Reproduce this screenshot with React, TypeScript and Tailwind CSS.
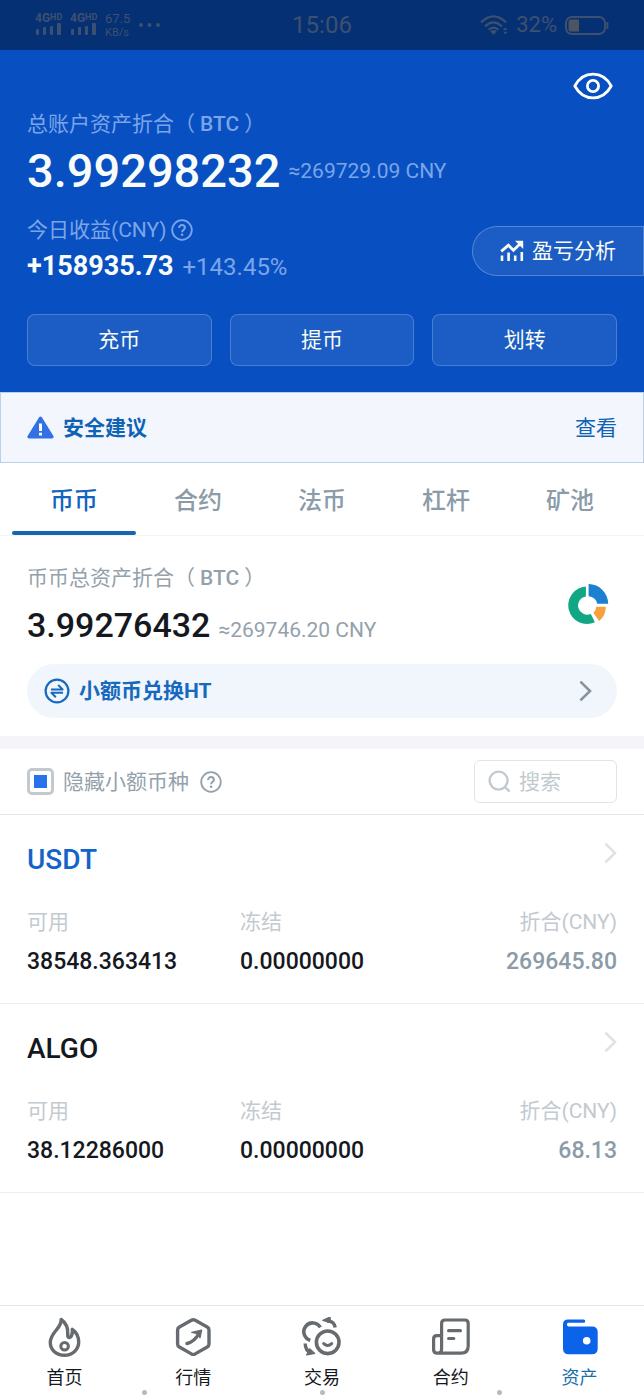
import type { ReactNode } from 'react'

const ACTIONS = ['充币', '提币', '划转']
const TABS = ['币币', '合约', '法币', '杠杆', '矿池']

const COINS = [
  { name: 'USDT', color: 'text-[#1264c8]', available: '38548.363413', frozen: '0.00000000', value: '269645.80' },
  { name: 'ALGO', color: 'text-[#15181e]', available: '38.12286000', frozen: '0.00000000', value: '68.13' },
]

const NAV: { label: string; icon: ReactNode; active?: boolean }[] = [
  { label: '首页', icon: <FlameIcon /> },
  { label: '行情', icon: <MarketIcon /> },
  { label: '交易', icon: <TradeIcon /> },
  { label: '合约', icon: <ContractIcon /> },
  { label: '资产', icon: <WalletIcon />, active: true },
]

function FlameIcon() {
  return (
    <svg width="40" height="40" viewBox="0 0 40 40" fill="none" stroke="currentColor" strokeWidth="3.4" strokeLinejoin="round" aria-hidden="true">
      <path d="M17.2 2.5C17.8 11.5 6.3 15 6.3 25.5C6.3 33 12.5 38.2 20.5 38.2S34.7 32.5 34.7 25C34.7 19.8 32 15 28.3 12.3C28.8 17 27.3 20.6 25.3 20.6C22.3 20.6 25 14.5 22.6 9C21.3 6 19.5 4 17.2 2.5Z" />
      <circle cx="20.6" cy="29.2" r="3.8" strokeWidth="3" />
    </svg>
  )
}

function MarketIcon() {
  return (
    <svg width="40" height="40" viewBox="0 0 40 40" fill="none" stroke="currentColor" strokeWidth="3.4" strokeLinejoin="round" aria-hidden="true">
      <path d="M18.4 3.3Q20.3 2.3 22.2 3.3L34.2 10Q36 11 36 13V27Q36 29 34.2 30L22.2 36.9Q20.3 37.9 18.4 36.9L6.4 30Q4.6 29 4.6 27V13Q4.6 11 6.4 10Z" />
      <path d="M14 26.5C19 25.2 23 22 25.6 17" strokeLinecap="round" />
      <path d="M18.8 15.4L28.6 13.2L27 20.6L24.3 16.6Z" fill="currentColor" strokeWidth="1.4" />
    </svg>
  )
}

function TradeIcon() {
  return (
    <svg width="40" height="40" viewBox="0 0 40 40" fill="none" stroke="currentColor" strokeWidth="3.6" aria-hidden="true">
      <circle cx="25.7" cy="25.3" r="11.3" />
      <path d="M21.7 26.6Q25.7 30.4 29.7 26.6" strokeWidth="3" strokeLinecap="round" />
      <path d="M18.3 10.4A8.8 8.8 0 1 0 8.3 23.2" />
      <path d="M25 4.2C29.5 3.8 32.5 6.3 33.2 10.6" strokeWidth="3.4" />
      <path d="M20.8 3.4L28 0L28.6 5.6Z" fill="currentColor" strokeWidth="1.2" strokeLinejoin="round" />
      <path d="M3.2 26.6C3.2 31 5.2 34.6 9.2 35.6" strokeWidth="3.4" />
      <path d="M4.6 38L12.8 36.4L7.6 31.8Z" fill="currentColor" strokeWidth="1.2" strokeLinejoin="round" />
    </svg>
  )
}

function ContractIcon() {
  return (
    <svg width="40" height="40" viewBox="0 0 40 40" fill="none" stroke="currentColor" strokeWidth="3.2" strokeLinejoin="round" strokeLinecap="round" aria-hidden="true">
      <path d="M10.6 32V6.4Q10.6 3 14 3H33.8Q37.2 3 37.2 6.4V29Q37.2 36.2 30 36.2H6.4Q2.6 36.2 2.6 32.4V22Q2.6 18.6 6 18.6H10.6V32Q10.6 36.2 7 36.2" />
      <path d="M17.6 13.7H29.4M17.6 21.5H22.8" />
    </svg>
  )
}

function WalletIcon() {
  return (
    <svg width="40" height="40" viewBox="0 0 40 40" fill="currentColor" aria-hidden="true">
      <path d="M8 2.5H23.6A1.6 1.6 0 0 1 23.6 5.8H8.6A1.7 1.7 0 0 0 8.6 9.4H32Q37.7 9.4 37.7 15V31.5Q37.7 37.3 32 37.3H8.6Q3 37.3 3 31.5V7.5Q3 2.5 8 2.5Z" />
      <circle cx="26.7" cy="23.7" r="3.8" fill="#fff" />
    </svg>
  )
}

function EyeIcon() {
  return (
    <svg width="40" height="28" viewBox="0 0 40 28" fill="none" stroke="currentColor" strokeWidth="2.8" strokeLinejoin="round" aria-hidden="true">
      <path d="M1.8 14C6 6.2 12.4 2.2 20 2.2S34 6.2 38.2 14C34 21.8 27.6 25.8 20 25.8S6 21.8 1.8 14Z" />
      <circle cx="20" cy="14" r="5.6" />
    </svg>
  )
}

function HelpIcon() {
  return (
    <svg width="22" height="22" viewBox="0 0 22 22" fill="none" stroke="currentColor" strokeWidth="1.8" aria-hidden="true">
      <circle cx="11" cy="11" r="9.8" />
      <path d="M8.1 8.9C8.1 7.2 9.3 6.1 11 6.1S13.9 7.1 13.9 8.7C13.9 10.6 11.1 10.9 11.1 13.2" strokeWidth="2" />
      <circle cx="11.1" cy="15.8" r="1.3" fill="currentColor" stroke="none" />
    </svg>
  )
}

function ProfitIcon() {
  return (
    <svg width="24" height="22" viewBox="0 0 24 22" fill="none" stroke="currentColor" strokeWidth="3" aria-hidden="true">
      <path d="M1.2 11.4L8.4 5.2L13.4 10.2L21 3" strokeWidth="2.8" />
      <path d="M15 0.8H23.2V9Z" fill="currentColor" stroke="none" />
      <path d="M2 21V15.6M8.6 21V12.6M15.2 21V15.6M21.8 21V12" strokeWidth="2.6" />
    </svg>
  )
}

function WarningIcon() {
  return (
    <svg width="27" height="23" viewBox="0 0 27 23" aria-hidden="true">
      <path d="M12 1.6Q13.5-0.4 15 1.6L26.4 20Q27.2 22.4 24.8 22.4H2.2Q-0.2 22.4 0.6 20Z" fill="#3270e6" />
      <path d="M12 7.4H15V15H12ZM12 16.8H15V19.4H12Z" fill="#fff" />
    </svg>
  )
}

function AllocationIcon() {
  return (
    <svg width="41" height="41" viewBox="0 0 41 41" aria-hidden="true">
      <path d="M17.9 2.6A18.7 18.7 0 1 0 26.9 38.2L22.8 30A9.2 9.2 0 1 1 17.9 12.4Z" fill="#11a784" />
      <path d="M20.6 0A20 20 0 0 1 40.2 19.8H29.2A9.6 9.6 0 0 0 20.6 12.2Z" fill="#1c80d0" />
      <path d="M28.3 22.8H37.8A18.5 18.5 0 0 1 31.2 37L25.4 29A9 9 0 0 0 28.3 22.8Z" fill="#f5a13c" />
    </svg>
  )
}

function SwapIcon() {
  return (
    <svg width="26" height="26" viewBox="0 0 26 26" fill="none" stroke="currentColor" strokeWidth="2.2" aria-hidden="true">
      <circle cx="13" cy="13" r="11.4" />
      <path d="M7 11.4H18.6L14.2 7M19 14.8H7.4L11.8 19.2" strokeWidth="2" strokeLinejoin="round" />
    </svg>
  )
}

function Chevron({ className }: { className: string }) {
  return (
    <svg width="13" height="22" viewBox="0 0 13 22" fill="none" stroke="currentColor" strokeWidth="2.6" className={className} aria-hidden="true">
      <path d="M1.4 1.6L11 11L1.4 20.4" />
    </svg>
  )
}

function Signal() {
  return (
    <div className="w-[27px] pb-[3px]">
      <div className="flex items-start text-xs leading-[10px] font-bold">
        4G<span className="text-[9px] leading-[8px]">HD</span>
      </div>
      <svg width="27" height="12" viewBox="0 0 27 12" fill="currentColor" aria-hidden="true">
        <rect x="1" y="6" width="3" height="6" rx="1" />
        <rect x="8" y="4" width="3" height="8" rx="1" />
        <rect x="15" y="3" width="3" height="9" rx="1" />
        <rect x="22" y="0" width="4" height="12" rx="1" />
      </svg>
    </div>
  )
}

function StatusBar() {
  return (
    <div className="grid h-[50px] grid-cols-[1fr_auto_1fr] items-center bg-[#053074] px-[35px] text-[#3d506f]">
      <div className="flex items-center gap-2">
        <Signal />
        <Signal />
        <div>
          <div className="text-[13px] leading-[15px]">67.5</div>
          <div className="text-[11px] leading-[13px]">KB/s</div>
        </div>
        <svg width="21" height="4" viewBox="0 0 21 4" fill="currentColor" className="ml-px" aria-hidden="true">
          <circle cx="2" cy="2" r="2" />
          <circle cx="10.5" cy="2" r="2" />
          <circle cx="19" cy="2" r="2" />
        </svg>
      </div>
      <div className="text-2xl">15:06</div>
      <div className="flex items-center justify-end gap-2">
        <svg width="28" height="20" viewBox="0 0 28 20" fill="none" stroke="currentColor" strokeWidth="2.2" aria-hidden="true">
          <path d="M1 7.4Q13.5-4.6 26 7.4M5 11.4Q13.5 3.2 22 11.4M8.6 14.8Q13.5 10.4 18.4 14.8" />
          <path d="M10.2 16.4Q13.5 13.6 16.8 16.4L13.5 19.8Z" fill="currentColor" stroke="none" />
          <path d="M23 15L25.2 12.2L27.4 15ZM23 16.8L25.2 19.6L27.4 16.8Z" fill="currentColor" stroke="none" />
        </svg>
        <span className="text-[22px]">32%</span>
        <svg width="44" height="19" viewBox="0 0 44 19" fill="none" stroke="currentColor" strokeWidth="2" aria-hidden="true">
          <rect x="1" y="1" width="39" height="17" rx="6" />
          <path d="M6 3.5H14V15.5H6Q3.5 15.5 3.5 13V6Q3.5 3.5 6 3.5Z" fill="#4d5560" stroke="none" />
          <path d="M42.4 6V13" />
        </svg>
      </div>
    </div>
  )
}

export default function App() {
  return (
    <div className="flex min-h-screen flex-col bg-white font-['Roboto','Noto_Sans_CJK_SC',sans-serif] text-[21px] leading-7 text-[#15181e]">
      <StatusBar />

      {/* Account summary */}
      <header className="flex flex-col bg-[#0850c1] px-[27px] pt-[18px] pb-[26px] text-[#7ba5e8]">
        <button type="button" aria-label="显示资产" className="flex h-9 w-12 items-center justify-center self-end text-white">
          <EyeIcon />
        </button>
        <div className="mt-[6px]">
          总账户资产折合（<span className="mx-[5px] font-medium">BTC</span>）
        </div>
        <div className="mt-[5px] flex items-center gap-2">
          <span className="text-[47px] leading-[56px] font-medium text-[#f8fcf8]">3.99298232</span>
          <span>≈269729.09 CNY</span>
        </div>
        <div className="mt-[17px] flex items-center justify-between">
          <div>
            <div className="flex items-center gap-[5px]">
              今日收益(CNY)
              <HelpIcon />
            </div>
            <div className="mt-[6px] flex items-baseline gap-[9px] leading-8">
              <span className="text-[27px] font-bold text-[#f8fcf8]">+158935.73</span>
              <span className="text-2xl leading-8">+143.45%</span>
            </div>
          </div>
          <button type="button" className="mt-[2px] -mr-[27px] flex h-[50px] items-center gap-2 rounded-l-full border border-white/25 bg-white/8 px-[27px] text-[#f8fcf0]">
            <ProfitIcon />
            盈亏分析
          </button>
        </div>
        <div className="mt-[31px] grid grid-cols-3 gap-[18px]">
          {ACTIONS.map((label) => (
            <button key={label} type="button" className="h-[52px] rounded-lg border border-white/20 bg-white/8 text-[#f8fcf0]">
              {label}
            </button>
          ))}
        </div>
      </header>

      {/* Security notice */}
      <div className="flex h-[71px] items-center gap-[9px] border border-[#b9d2ea] bg-[#f3f6fc] px-[26px] text-[#0f63b5]">
        <WarningIcon />
        <span className="font-bold">安全建议</span>
        <a href="#security" className="ml-auto">查看</a>
      </div>

      <nav className="grid grid-cols-5 border-b border-[#f1f3f5] px-3 text-2xl font-medium text-[#8b9ba7]">
        {TABS.map((tab, i) => (
          <button key={tab} type="button" className="flex h-[72px] flex-col pt-[22px]">
            <span className={`w-full leading-8 ${i === 0 ? 'text-[#1264c0]' : ''}`}>{tab}</span>
            {i === 0 && <span className="mt-auto h-1 w-full rounded-full bg-[#1764b4]" />}
          </button>
        ))}
      </nav>

      {/* Spot balance */}
      <section className="px-[27px] pt-7 pb-[18px] text-[#94a1ab]">
        <div className="flex items-center justify-between pr-2">
          <div>
            <div>
              币币总资产折合（<span className="mx-[5px] font-medium">BTC</span>）
            </div>
            <div className="mt-[13px] flex items-baseline gap-2">
              <span className="text-[34px] leading-10 font-medium text-[#15181e]">3.99276432</span>
              <span>≈269746.20 CNY</span>
            </div>
          </div>
          <AllocationIcon />
        </div>
        <button type="button" className="mt-[19px] flex h-[54px] w-full items-center gap-[9px] rounded-full bg-[#f1f6fd] px-[17px] text-[#1769bd]">
          <SwapIcon />
          <span className="font-bold">小额币兑换HT</span>
          <Chevron className="mr-2 ml-auto text-[#84939d]" />
        </button>
      </section>

      <div className="h-[13px] bg-[#f5f5f9]" />

      <div className="flex h-[66px] items-center border-b border-[#e6e8ea] px-[27px] text-[#94a1ab]">
        <label className="flex items-center gap-[9px]">
          <input type="checkbox" defaultChecked className="size-[27px] appearance-none rounded-[5px] border-3 border-[#c4c9ce] bg-white p-1 checked:bg-[#2873ec] checked:bg-clip-content" />
          隐藏小额币种
        </label>
        <button type="button" aria-label="说明" className="ml-[11px]">
          <HelpIcon />
        </button>
        <label className="ml-auto flex h-[43px] w-[143px] items-center gap-2 rounded-md border border-[#e1e4e7] pl-[13px] text-[#c2cacf]">
          <svg width="23" height="23" viewBox="0 0 23 23" fill="none" stroke="currentColor" strokeWidth="2.4" className="shrink-0" aria-hidden="true">
            <circle cx="10.6" cy="10.6" r="9" />
            <path d="M17 17L21.6 21.6" />
          </svg>
          <input type="text" aria-label="搜索" placeholder="搜索" className="w-full min-w-0 outline-none placeholder:text-[#c2cacf]" />
        </label>
      </div>

      {COINS.map((coin) => (
        <section key={coin.name} className="border-b border-[#eceef0] px-[27px] pt-[27px] pb-[27px]">
          <div className="flex items-start justify-between">
            <h2 className={`text-[28px] leading-9 font-medium ${coin.color}`}>{coin.name}</h2>
            <Chevron className="text-[#dfe2e4]" />
          </div>
          <dl className="mt-[30px] grid grid-cols-[13fr_13fr_10fr] text-[23px] leading-7 font-medium">
            <div>
              <dt className="text-[21px] leading-7 font-normal text-[#c3cad0]">可用</dt>
              <dd className="mt-3">{coin.available}</dd>
            </div>
            <div>
              <dt className="text-[21px] leading-7 font-normal text-[#c3cad0]">冻结</dt>
              <dd className="mt-3">{coin.frozen}</dd>
            </div>
            <div className="text-right">
              <dt className="text-[21px] leading-7 font-normal text-[#c3cad0]">折合(CNY)</dt>
              <dd className="mt-3 text-[#8b9ba7]">{coin.value}</dd>
            </div>
          </dl>
        </section>
      ))}

      <nav className="relative mt-auto grid grid-cols-5 border-t border-[#e3e5e7] pt-[11px] pb-[5px] text-lg leading-6">
        {NAV.map((item) => (
          <a key={item.label} href="#nav" className={`flex flex-col items-center gap-[9px] ${item.active ? 'text-[#1a6fa8]' : ''}`}>
            <span className={item.active ? 'text-[#0b63ea]' : 'text-[#666b6f]'}>{item.icon}</span>
            {item.label}
          </a>
        ))}
        {/* System navigation dots */}
        <div className="absolute inset-x-0 bottom-0 flex justify-between px-[22%]">
          <span className="size-[5px] rounded-full bg-[#b8babc]" />
          <span className="size-[5px] rounded-full bg-[#b8babc]" />
          <span className="size-[5px] rounded-full bg-[#b8babc]" />
        </div>
      </nav>
    </div>
  )
}
